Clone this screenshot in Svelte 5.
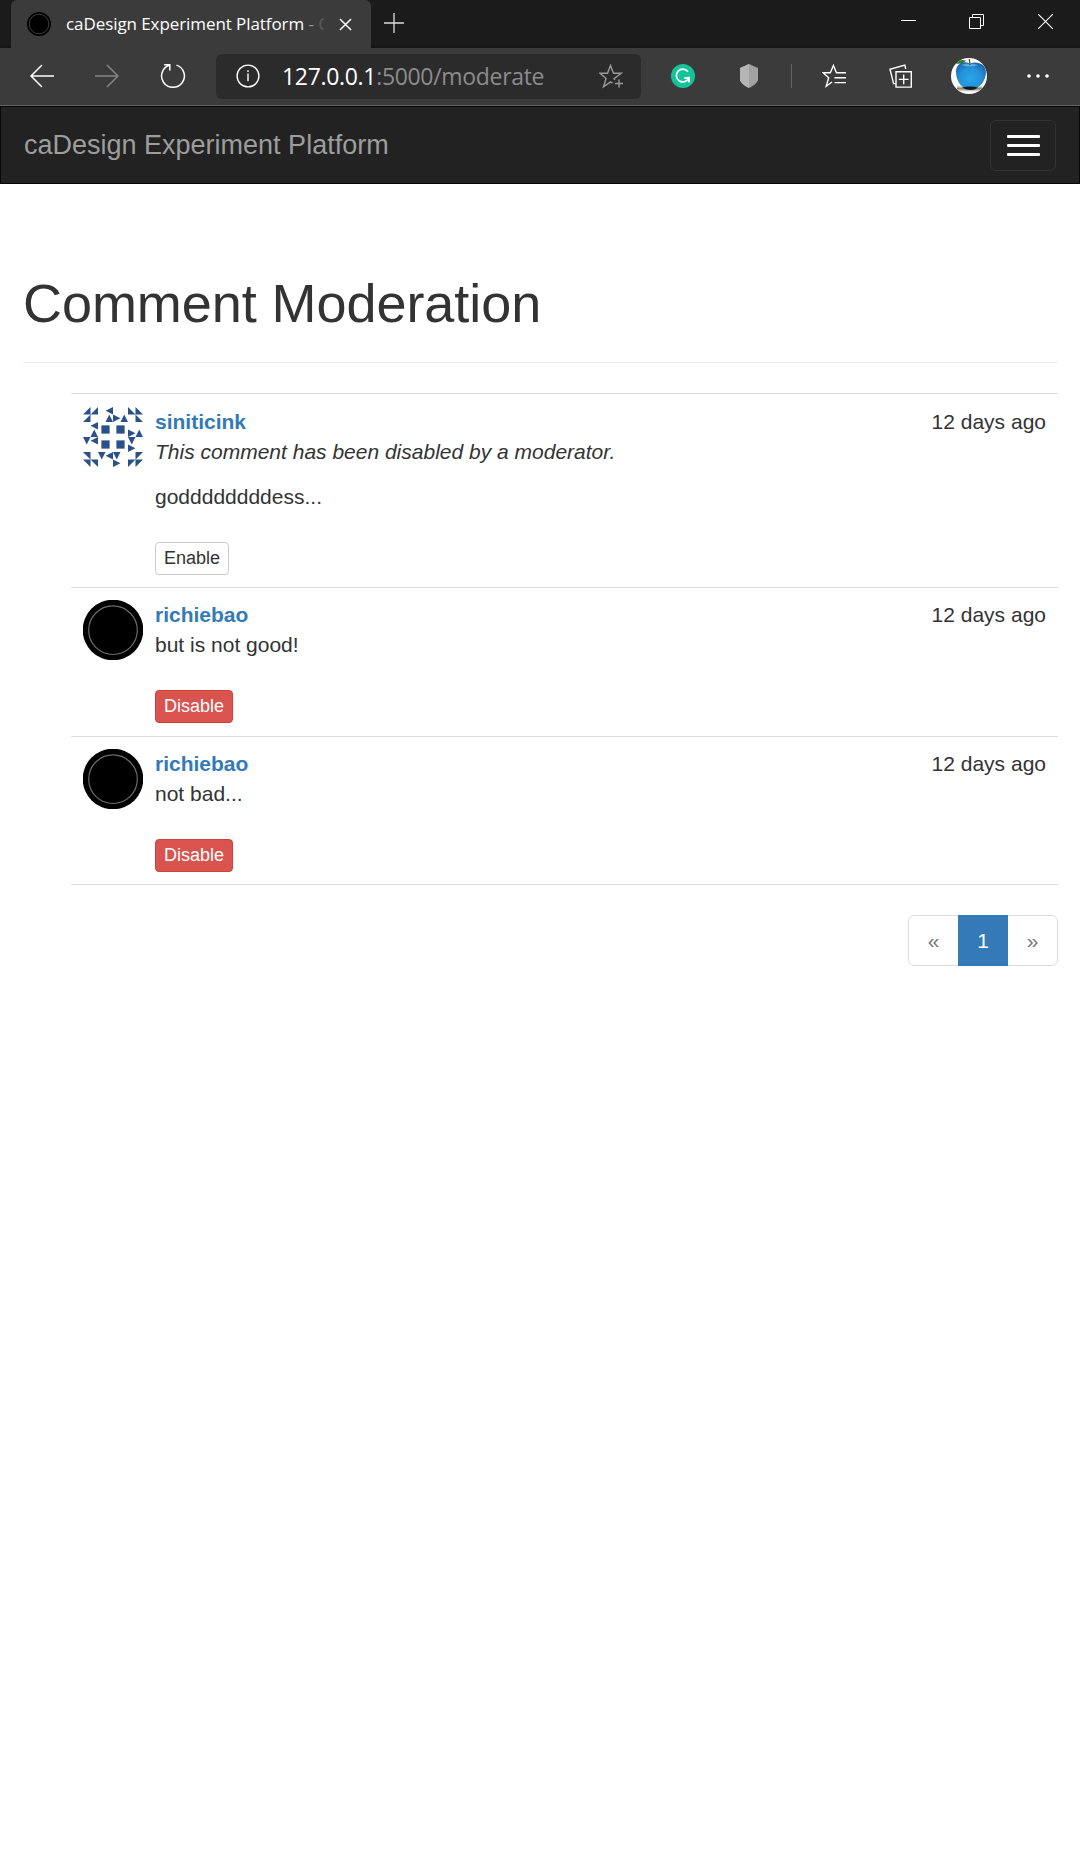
<script>
  const comments = [
    { author: 'siniticink', avatar: 'pattern', notice: 'This comment has been disabled by a moderator.', body: 'goddddddddess...', action: 'Enable', when: '12 days ago' },
    { author: 'richiebao', avatar: 'disc', body: 'but is not good!', action: 'Disable', when: '12 days ago' },
    { author: 'richiebao', avatar: 'disc', body: 'not bad...', action: 'Disable', when: '12 days ago' }
  ];
  const turns = [0, 90, 180, 270];
</script>

<div class="window">
  <div class="tabs">
    <div class="tab">
      <svg class="favicon" width="24" height="24" viewBox="0 0 24 24">
        <circle cx="12" cy="12" r="12" fill="#000" />
        <circle cx="12" cy="12" r="9.8" fill="none" stroke="#3a3a3a" stroke-width="1" />
      </svg>
      <span class="tab-title">caDesign Experiment Platform <i>-</i> <b>C</b></span>
      <svg class="tab-close" width="13" height="13" viewBox="0 0 14 14" stroke="#fff" stroke-width="1.6"><path d="M1 1l12 12M13 1L1 13" /></svg>
    </div>
    <svg class="new-tab" width="20" height="20" viewBox="0 0 20 20" stroke="#ddd" stroke-width="1.3"><path d="M10 0v20M0 10h20" /></svg>
    <div class="controls">
      <svg width="15" height="15" viewBox="0 0 15 15" stroke="#fff"><path d="M0 6.5h15" /></svg>
      <svg width="15" height="15" viewBox="0 0 15 15" fill="none" stroke="#fff"><path d="M.5 3.5h11v11H.5zM3.5 3.5v-3h11v11h-3" /></svg>
      <svg width="15" height="15" viewBox="0 0 15 15" stroke="#fff" stroke-width="1.1"><path d="M0 0l15 15M15 0L0 15" /></svg>
    </div>
  </div>

  <div class="toolbar">
    <div class="nav">
      <svg width="24" height="24" viewBox="0 0 24 24" fill="none" stroke="#fff" stroke-width="1.5"><path d="M24 12H1.2M12 1L1 12l11 11" /></svg>
      <svg width="24" height="24" viewBox="0 0 24 24" fill="none" stroke="#858585" stroke-width="1.5"><path d="M0 12h22.8M12 1l11 11-11 11" /></svg>
      <svg width="26" height="26" viewBox="0 0 26 26" fill="none" stroke="#fff" stroke-width="1.5"><path d="M16.5 2.1A11.4 11.4 0 1 1 9.8 2M4.2 1.8h5.6v5.6" /></svg>
    </div>
    <div class="address">
      <svg width="24" height="24" viewBox="0 0 24 24" fill="none" stroke="#fff" stroke-width="1.4"><circle cx="12" cy="12" r="10.9" /><path d="M12 9.6v7.6M12 6.2v1.7" /></svg>
      <span class="url"><b>127.0.0.1</b>:5000/moderate</span>
      <svg class="star" width="25" height="25" viewBox="0 0 25 25" fill="none" stroke="#9a9a9a" stroke-width="1.4"><path d="M16 15.6l-1-.8 7.2-5.6h-7.7L11.5 1.5 8.5 9.2H1l6.1 5.2-2.6 8.4 7-4.9 2 1.4M20 15.500v8M16 19.500h8" /></svg>
    </div>
    <div class="tools">
      <svg class="grammar" width="24" height="24" viewBox="0 0 24 24"><circle cx="12" cy="12" r="12" fill="#15c39a" /><path d="M17 7.800A6.400 6.400 0 1 0 17.700 14h-4.300M18 12.800v5.600" fill="none" stroke="#fff" stroke-width="1.800" /></svg>
      <svg class="shield" width="18" height="24" viewBox="0 0 18 24"><path d="M9 0l9 4v12.500Q15 21.500 9 24Q3 21.500 0 16.500V4z" fill="#a2a2a2" /><path d="M9 0v24Q3 21.500 0 16.500V4z" fill="#b5b5b5" /></svg>
      <span class="divider"></span>
      <svg class="favorites" width="24" height="24" viewBox="0 0 24 24" fill="none" stroke="#fff" stroke-width="1.4"><path d="M24 8.800h-9.500L11.400 1.500 8.300 8.800H1l5.700 5-2.500 8.400L10 18M12.500 13.700H24M12.500 18.600H24" /></svg>
      <svg class="collections" width="24" height="24" viewBox="0 0 24 24" fill="none" stroke="#fff" stroke-width="1.4"><path d="M7 7.700h15.300v15.400H7zM14.700 10.500v9.800M9.800 15.400h9.800M16.800 5l-1-3.800L1 5.300l3.600 14.300H7" /></svg>
      <svg class="profile" width="36" height="36" viewBox="0 0 36 36">
        <defs>
          <clipPath id="round"><circle cx="18" cy="18" r="18" /></clipPath>
          <radialGradient id="apple" cx=".48" cy=".6" r=".62"><stop offset="0" stop-color="#2aa6ea" /><stop offset=".6" stop-color="#2490d8" /><stop offset="1" stop-color="#1b68ad" /></radialGradient>
          <linearGradient id="ground" x2="0" y2="1"><stop offset="0" stop-color="#b9b497" stop-opacity="0" /><stop offset=".5" stop-color="#8d8868" /><stop offset="1" stop-color="#fff" /></linearGradient>
        </defs>
        <g clip-path="url(#round)">
          <path d="M0 0h36v36H0z" fill="#fff" />
          <path d="M6 27h25v7H6z" fill="url(#ground)" />
          <path d="M19 5.500C13 2.500 5 5 5 14c0 9 6 17.500 14.500 17.500S35 23 35 14C35 6 26 2.500 19 5.500z" fill="url(#apple)" />
          <path d="M11 29.500q4 2.500 8.500 2.500t7.500-2.500q-8-2-16 0z" fill="#0a1c26" />
          <path d="M10 7q8-3 17 0-8 3-17 0z" fill="#7cc9f0" opacity=".65" />
          <path d="M4.500 5.500Q8 .8 15 2.500q-3 4-10.500 3z" fill="#2a7d33" />
          <path d="M18.300 1l.7 6" stroke="#62483c" stroke-width="1.300" />
        </g>
      </svg>
      <svg class="more" width="22" height="4" viewBox="0 0 22 4" fill="#fff"><circle cx="2" cy="2" r="1.800" /><circle cx="11" cy="2" r="1.800" /><circle cx="20" cy="2" r="1.800" /></svg>
    </div>
  </div>

  <header class="navbar">
    <a class="brand">caDesign Experiment Platform</a>
    <button class="toggle" aria-label="Menu"><span></span><span></span><span></span></button>
  </header>

  <main>
    <h1>Comment Moderation</h1>
    <ul class="comments">
      {#each comments as c}
        <li class:tall={c.notice}>
          {#if c.avatar === 'pattern'}
            <svg class="avatar" width="60" height="60" viewBox="0 0 8 8" fill="#2b5288">
              {#each turns as t}
                <g transform="rotate({t} 4 4)">
                  <path d="M0 1L1 0V1zM1 1L2 0V1zM0 2L1 1V2z" />
                  <path d="M3 .5L4 0V1zM3 2L3.500 1 4 2zM4 1L5 1.500 4 2zM5 2L5.500 1 6 2z" />
                  <path d="M2.450 2.450h1.100v1.100h-1.100z" />
                </g>
              {/each}
            </svg>
          {:else}
            <svg class="avatar" width="60" height="60" viewBox="0 0 60 60"><circle cx="30" cy="30" r="30.300" /><circle cx="30" cy="30.200" r="24.300" fill="none" stroke="#6c6c6c" stroke-width="1.200" /></svg>
          {/if}
          <div class="content">
            <div class="meta"><a>{c.author}</a><time>{c.when}</time></div>
            {#if c.notice}<p class="notice">{c.notice}</p>{/if}
            <p>{c.body}</p>
            <button class="action" class:danger={c.action === 'Disable'}>{c.action}</button>
          </div>
        </li>
      {/each}
    </ul>
    <div class="pagination"><span>«</span><span class="current">1</span><span>»</span></div>
  </main>
</div>

<style>
  :global(body) { background: #fff; }
  .window { width: 1080px; min-height: 1874px; font: 21px/30px "Liberation Sans", Arial, sans-serif; color: #333; }
  .window * { box-sizing: border-box; }
  svg { display: block; flex: none; }
  .tabs { height: 48px; background: linear-gradient(#1b1b1b 44px, #141414); display: flex; align-items: flex-start; padding-left: 11px; }
  .tab { width: 360px; height: 48px; flex: none; background: #3b3b3b; border-radius: 6px 6px 0 0; display: flex; align-items: center; padding-left: 16px; color: #fff; }
  .tab-title { width: 258px; margin-left: 15px; font: 17px/24px "Open Sans", sans-serif; letter-spacing: -.08px; white-space: nowrap; overflow: hidden; }
  .tab-title i { font-style: normal; color: #999; }
  .tab-title b { font-weight: 400; color: #5c5c5c; }
  .tab-close { margin-left: 15px; }
  .new-tab { margin: 13px 0 0 13px; }
  .controls { margin: 14px 27px 0 auto; display: flex; gap: 54px; }
  .controls svg:first-child { margin-right: -1px; }
  .toolbar { height: 58px; background: #3b3b3b; border-bottom: 1px solid #636363; display: flex; align-items: flex-start; padding-top: 6px; }
  .nav { display: flex; gap: 41px; align-items: center; height: 43px; padding-left: 30px; width: 216px; }
  .address { width: 425px; height: 45px; background: #2b2b2b; border-radius: 6px; display: flex; align-items: center; padding: 0 17px 1px 20px; }
  .url { margin-left: 22px; font: 23px/34px "Open Sans", sans-serif; letter-spacing: -.32px; color: #8c8c8c; white-space: nowrap; }
  .url b { font-weight: 400; color: #fff; }
  .star { margin-left: auto; }
  .tools { display: flex; align-items: center; height: 44px; flex: 1; padding-left: 30px; }
  .shield { margin-left: 45px; }
  .divider { width: 1px; height: 24px; background: #626262; margin-left: 33px; }
  .favorites { margin-left: 30px; }
  .collections { margin-left: 43px; }
  .profile { margin-left: 38px; }
  .more { margin-left: 40px; }
  .navbar { height: 78px; background: #222; border: 1px solid #080808; display: flex; align-items: center; justify-content: space-between; padding: 0 23px; }
  .brand { font-size: 27px; color: #9d9d9d; }
  .toggle { width: 66px; height: 51px; border: 1px solid #333; border-radius: 6px; background: none; display: flex; flex-direction: column; align-items: center; justify-content: center; gap: 6px; padding: 0; }
  .toggle span { width: 33px; height: 3px; background: #fff; border-radius: 1px; }
  main { padding: 89px 22px 0 23px; }
  h1 { margin: 0; height: 90px; font-size: 54px; line-height: 60px; font-weight: 400; letter-spacing: -.06px; border-bottom: 1px solid #eee; }
  .comments { list-style: none; margin: 30px 0 0; padding: 0 0 0 48px; }
  li { height: 149px; border-top: 1px solid #ddd; padding: 12px; display: flex; gap: 12px; }
  li.tall { height: 194px; padding-top: 13px; }
  li:last-child { border-bottom: 1px solid #ddd; }
  .content { flex: 1; }
  .meta { display: flex; justify-content: space-between; }
  .meta a { color: #337ab7; font-weight: 700; }
  p { margin: 0 0 30px; }
  .notice { font-style: italic; margin-bottom: 15px; }
  .action { display: block; height: 33px; padding: 0 8px; font: 18px/27px "Liberation Sans", Arial, sans-serif; color: #333; background: #fff; border: 1px solid #ccc; border-radius: 4px; }
  .danger { color: #fff; background: #d9534f; border-color: #d43f3a; }
  .pagination { display: flex; width: 150px; height: 51px; margin: 30px 0 0 auto; border: 1px solid #ddd; border-radius: 6px; }
  .pagination span { flex: 1; display: flex; align-items: center; justify-content: center; color: #777; }
  .pagination .current { flex: 0 0 50px; margin: -1px 0; color: #fff; background: #337ab7; }
</style>
